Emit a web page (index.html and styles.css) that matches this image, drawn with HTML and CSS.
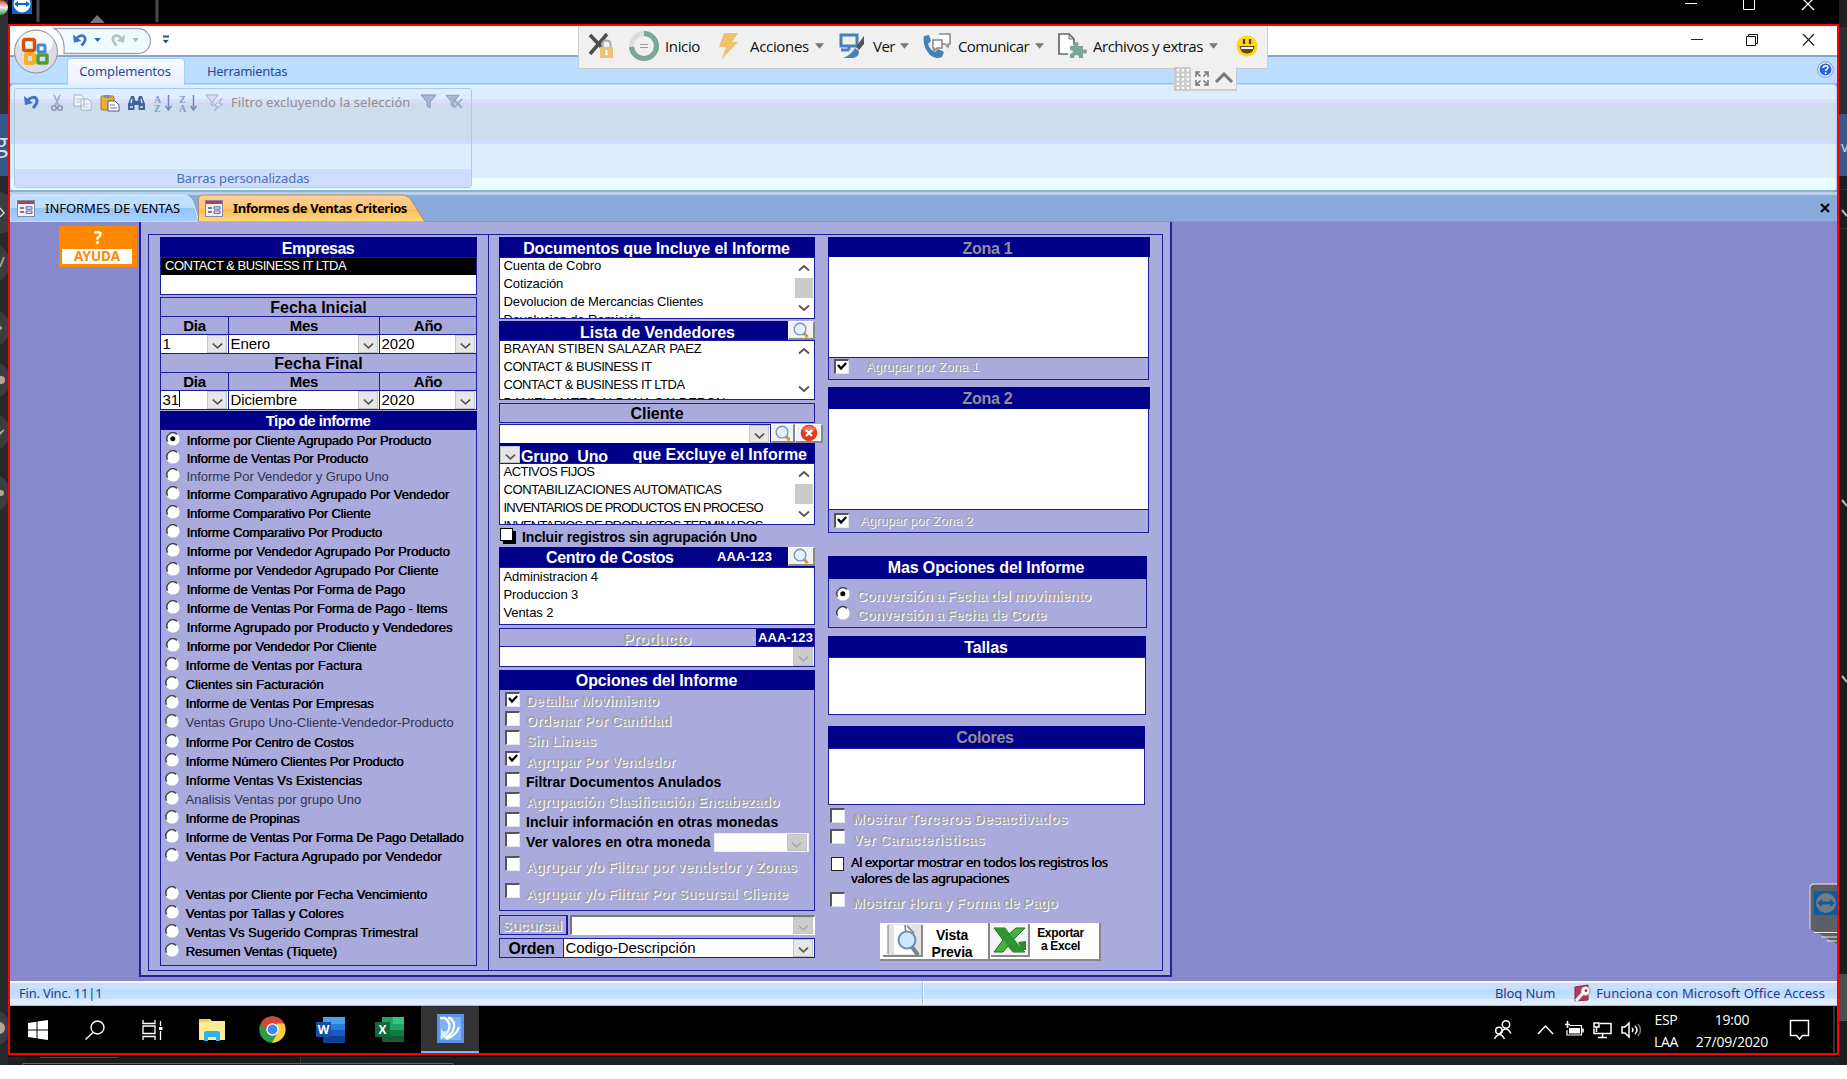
FILE: index.html
```html
<!DOCTYPE html>
<html lang="es">
<head>
<meta charset="utf-8">
<title>Informes de Ventas Criterios</title>
<link rel="stylesheet" href="styles.css">
</head>
<body>
<svg class="defs" width="0" height="0">
  <symbol id="chev" viewBox="0 0 12 8"><path d="M1 1.5l5 4.5 5-4.5" fill="none" stroke="currentColor" stroke-width="1.8"/></symbol>
  <symbol id="radio" viewBox="0 0 14 14"><circle cx="7" cy="7" r="6.6" fill="#fff"/><path d="M1.6 9.6A6 6 0 0 1 11 2.4" fill="none" stroke="#444" stroke-width="1.5"/></symbol>
  <symbol id="radio-on" viewBox="0 0 14 14"><circle cx="7" cy="7" r="6.6" fill="#fff"/><path d="M1.6 9.6A6 6 0 0 1 11 2.4" fill="none" stroke="#444" stroke-width="1.5"/><circle cx="6.8" cy="6.8" r="2.5" fill="#000"/></symbol>
  <symbol id="tick" viewBox="0 0 10 9"><path d="M1 3l3 3.6L9.2 1" fill="none" stroke="#000" stroke-width="2.3"/></symbol>
  <symbol id="lens" viewBox="0 0 20 18"><path d="M12 11l5 5" stroke="#c9a13c" stroke-width="3.4"/><circle cx="9" cy="7.5" r="6.2" fill="#e3f1ff" stroke="#7d93b8" stroke-width="1.4"/></symbol>
  <symbol id="undo" viewBox="0 0 16 14"><path d="M3 7c3-6 10-6 10-1 0 3-2 5-4 7" fill="none" stroke="currentColor" stroke-width="3"/><path d="M0 1l1 9 8-2z" fill="currentColor"/></symbol>
  <symbol id="caret" viewBox="0 0 10 6"><path d="M0 0h10L5 6z" fill="currentColor"/></symbol>
  <symbol id="formicon" viewBox="0 0 18 17"><rect x=".5" y=".5" width="17" height="16" fill="#f4f0f6" stroke="#8a86a8"/><path d="M1 1h16v3H1z" fill="#b04058"/><path d="M3 8h4M3 12h4" stroke="#556" stroke-width="1.4"/><path d="M9 6.800h6v2.400H9zM9 11h6v2.400H9z" fill="#dde6fa" stroke="#5a6aa0"/></symbol>
  <symbol id="funnel" viewBox="0 0 18 16"><path d="M1 1h15l-6 7v6l-3-2V8z" fill="#a9b8d4" stroke="#8594b6"/></symbol>
</svg>

<div class="page">
  <div class="edge edge-left">
    <div class="e-logo"></div><div class="e-gap"></div><div class="e-blue"><span>g</span></div>
    <svg class="e-marks" width="8" height="879" viewBox="0 0 8 879">
      <g fill="#3a3e41"><circle cx="-3" cy="37" r="21"/><circle cx="-10" cy="87" r="20"/><circle cx="-10" cy="152" r="20"/><circle cx="-10" cy="204" r="20"/><circle cx="-10" cy="256" r="20"/><circle cx="-10" cy="317" r="20"/><circle cx="-10" cy="852" r="20"/></g>
      <path d="M0 32l4 5-4 4" stroke="#d8d8d8" fill="none" stroke-width="1.4"/>
      <path d="M0 91l4-10" stroke="#b39a80" stroke-width="2"/><g fill="#b3a59a"><circle cx="0" cy="152" r="2"/><circle cx="1" cy="204" r="4"/><path d="M0 259l4-4v-2l-4 3z"/><circle cx="1" cy="317" r="3"/><circle cx="-1" cy="852" r="6"/></g>
    </svg>
  </div>

  <div class="center">
    <div class="hostbar">
      <svg width="1831" height="24" viewBox="8 0 1831 24">
        <path d="M12 0h20v14H12z" fill="#0e63c4"/><ellipse cx="22" cy="4" rx="8.500" ry="8.500" fill="#fff"/><path d="M14 4l4-3v2h8V1l4 3-4 3V5h-8v2z" fill="#0e63c4"/>
        <path d="M38 0v22M157 0v22" stroke="#4a4a4a" stroke-width="3"/><path d="M90 23l7-8 8 8z" fill="#777"/>
        <path d="M1685 3.500h12" stroke="#fff"/><path d="M1743.500-2h11v11.500h-11z" fill="none" stroke="#fff"/><path d="M1802-2l12 12M1814-2l-12 12" stroke="#fff" stroke-width="1.300"/>
      </svg>
    </div>

    <div class="session">
      <div class="titlebar">
        <svg class="officebtn" width="160" height="50" viewBox="10 26 160 50">
          <path d="M54 28.500h84a12.500 12.500 0 0 1 0 25H64C65 41 62 33 54 28.500z" fill="#effcff" stroke="#9aa3ad" stroke-width="1.300"/>
          <circle cx="36" cy="51.500" r="21.500" fill="#dcdce8" stroke="#8a90a0"/><ellipse cx="36" cy="43" rx="17" ry="12" fill="#fff" opacity=".8"/>
          <rect x="23.500" y="39.500" width="11" height="11" rx="2" fill="none" stroke="#d8500f" stroke-width="3.500"/><rect x="38" y="45" width="7" height="7" rx="1" fill="none" stroke="#3f8bd8" stroke-width="3"/><rect x="26" y="54" width="8" height="9" rx="1" fill="none" stroke="#f5b21c" stroke-width="4"/><rect x="38" y="55" width="9" height="8" rx="1" fill="none" stroke="#4f9a3a" stroke-width="3.500"/>
          <svg x="73" y="33" width="15" height="14" color="#4470c8"><use href="#undo"/></svg>
          <svg x="94" y="38" width="7" height="4" color="#3a5fae"><use href="#caret"/></svg>
          <g transform="translate(125 33) scale(-1 1)"><svg width="15" height="14" color="#b9c0c8"><use href="#undo"/></svg></g>
          <svg x="132" y="38" width="7" height="4" color="#b9b9b9"><use href="#caret"/></svg>
          <path d="M163 36.500h6" stroke="#2b4a86" stroke-width="2"/><svg x="162.500" y="39.500" width="6.500" height="4" color="#2b4a86"><use href="#caret"/></svg>
        </svg>
        <svg class="winbtns" width="126" height="14" viewBox="1690 33 126 14">
          <path d="M1691 39.500h12" stroke="#222"/><path d="M1746.500 36.500h9v9h-9zM1748.500 36v-1.500h9v9H1756" fill="none" stroke="#111"/><path d="M1803 34l11 11.500M1814 34l-11 11.500" stroke="#222" stroke-width="1.200"/>
        </svg>
      </div>

      <div class="tabs">
        <div class="tab active">Complementos</div>
        <div class="tab plain">Herramientas</div>
        <svg class="help" width="17" height="17" viewBox="0 0 17 17"><circle cx="8.500" cy="8.500" r="7.800" fill="#e8f0fc" stroke="#7c98cc"/><circle cx="8.500" cy="8.500" r="6" fill="#2d62d8"/><path d="M6.300 7c0-3 4.600-3 4.600-.4 0 1.700-2.300 1.600-2.300 3.400M8.600 11.300v1.700" stroke="#fff" stroke-width="1.600" fill="none"/></svg>
      </div>

      <div class="ribbon">
        <div class="group">
          <div class="tools">
            <svg width="16" height="16" color="#4470c8"><use href="#undo"/></svg>
            <svg class="cut" width="14" height="18" viewBox="0 0 14 18"><path d="M4 1l5 11M10 1L5 12" stroke="#a4afc4" stroke-width="1.800"/><circle cx="4" cy="14" r="2.300" fill="none" stroke="#8d9ab6" stroke-width="1.600"/><circle cx="10" cy="14" r="2.300" fill="none" stroke="#8d9ab6" stroke-width="1.600"/></svg>
            <svg width="19" height="17" viewBox="0 0 19 17"><path d="M1 1h7l3 3v8H1zM8 5h7l3 3v8H8z" fill="#f1f5fc" stroke="#a4b1cc"/><path d="M3 5h5M3 8h4M10 10h6M10 13h6" stroke="#b7c2d8"/></svg>
            <svg width="20" height="18" viewBox="0 0 20 18"><rect x="1" y="2" width="13" height="14" rx="1" fill="#e8ae3a" stroke="#a8762a"/><path d="M4 1h7v3H4z" fill="#8a8f9c"/><path d="M8 7h7l4 4v6H8z" fill="#fff" stroke="#555c70"/><path d="M10 11h5M10 14h7" stroke="#5d76b4"/></svg>
            <svg width="19" height="17" viewBox="0 0 19 17"><path d="M1 16v-6l3-8h3l1.500 5h2L12 2h3l3 8v6h-6.500v-5h-4v5z" fill="#41649c"/><path d="M3 13h3M13 13h3M5 5l-1 4M14 5l1 4" stroke="#cfe0f8" stroke-width="1.500"/></svg>
            <svg width="18" height="18" viewBox="0 0 18 18"><text x="0" y="8.500" class="sort">A</text><text x="0" y="17.500" class="sort">Z</text><path d="M14.500 1v14M11.500 12l3 4 3-4" stroke="#7388b4" stroke-width="1.500" fill="none"/></svg>
            <svg width="18" height="18" viewBox="0 0 18 18"><text x="0" y="8.500" class="sort">Z</text><text x="0" y="17.500" class="sort">A</text><path d="M14.500 1v14M11.500 12l3 4 3-4" stroke="#7388b4" stroke-width="1.500" fill="none"/></svg>
            <svg width="19" height="17" viewBox="0 0 19 17"><path d="M1 1h12L8 7v5L6 10V7z" fill="#d4deee" stroke="#a0aec8"/><path d="M17 4l-8 8h4l-4 5 9-7h-4z" fill="#dfe6f4" stroke="#a0aec8"/></svg>
            <span class="filtertext">Filtro excluyendo la selección</span>
            <svg width="18" height="16"><use href="#funnel"/></svg>
            <svg width="18" height="16" viewBox="0 0 18 16"><use href="#funnel" width="16" height="15"/><path d="M8 5l9 9M17 5l-8 9" stroke="#9aa9c8" stroke-width="1.800"/></svg>
          </div>
          <div class="grouplabel">Barras personalizadas</div>
        </div>
      </div>

      <div class="doctabs">
        <svg class="tabshapes" width="430" height="28" viewBox="10 194 430 28">
          <defs>
            <linearGradient id="tabBlue" x2="0" y2="1"><stop offset="0" stop-color="#c4e2ff"/><stop offset=".48" stop-color="#bbddff"/><stop offset=".5" stop-color="#94c4f8"/><stop offset="1" stop-color="#a8d2ff"/></linearGradient>
            <linearGradient id="tabGold" x2="0" y2="1"><stop offset="0" stop-color="#ffd09a"/><stop offset=".5" stop-color="#ffc473"/><stop offset=".55" stop-color="#fdbb55"/><stop offset="1" stop-color="#ffdd80"/></linearGradient>
          </defs>
          <path d="M10 222v-23q0-4 4-4h170q7 0 10 10l5 17z" fill="url(#tabBlue)" stroke="#d8ecff"/>
          <path d="M198.500 222v-23q0-4 4-4H402q7 0 11 8l12 19z" fill="url(#tabGold)" stroke="#a89068"/>
        </svg>
        <div class="doctab first"><svg width="18" height="17"><use href="#formicon"/></svg><span>INFORMES DE VENTAS</span></div>
        <div class="doctab second"><svg width="18" height="17"><use href="#formicon"/></svg><span>Informes de Ventas Criterios</span></div>
        <svg class="docclose" width="10" height="10" viewBox="0 0 10 10"><path d="M1 1l8 8M9 1L1 9" stroke="#000" stroke-width="2.200"/></svg>
      </div>

      <div class="workspace">
        <div class="ayuda"><b>?</b><span>AYUDA</span></div>

        <div class="form"><div class="formframe">
          <div class="col col1">
            <div class="hd h20 tight5">Empresas</div>
            <div class="list empresas"><div class="row sel">CONTACT &amp; BUSINESS IT LTDA</div></div>
            <div class="dates">
              <div class="dt">Fecha Inicial</div>
              <div class="dh"><span>Dia</span><span>Mes</span><span>Año</span></div>
              <div class="di">
                <div class="combo">1<i><svg><use href="#chev"/></svg></i></div>
                <div class="combo">Enero<i><svg><use href="#chev"/></svg></i></div>
                <div class="combo">2020<i><svg><use href="#chev"/></svg></i></div>
              </div>
              <div class="dt">Fecha Final</div>
              <div class="dh"><span>Dia</span><span>Mes</span><span>Año</span></div>
              <div class="di">
                <div class="combo"><span class="cursor">31</span><i><svg><use href="#chev"/></svg></i></div>
                <div class="combo">Diciembre<i><svg><use href="#chev"/></svg></i></div>
                <div class="combo">2020<i><svg><use href="#chev"/></svg></i></div>
              </div>
            </div>
            <div class="hd tipo">Tipo de informe</div>
            <div class="radios">
              <label class="r r18"><svg><use href="#radio-on"/></svg>Informe por Cliente Agrupado Por Producto</label>
              <label class="r r18"><svg><use href="#radio"/></svg>Informe de Ventas Por Producto</label>
              <label class="r r18 dim"><svg><use href="#radio"/></svg>Informe Por Vendedor y Grupo Uno</label>
              <label class="r x"><svg><use href="#radio"/></svg>Informe Comparativo Agrupado Por Vendedor</label>
              <label class="r n"><svg><use href="#radio"/></svg>Informe Comparativo Por Cliente</label>
              <label class="r n"><svg><use href="#radio"/></svg>Informe Comparativo Por Producto</label>
              <label class="r x"><svg><use href="#radio"/></svg>Informe por Vendedor Agrupado Por Producto</label>
              <label class="r x"><svg><use href="#radio"/></svg>Informe por Vendedor Agrupado Por Cliente</label>
              <label class="r"><svg><use href="#radio"/></svg>Informe de Ventas Por Forma de Pago</label>
              <label class="r"><svg><use href="#radio"/></svg>Informe de Ventas Por Forma de Pago - Items</label>
              <label class="r xx"><svg><use href="#radio"/></svg>Informe Agrupado por Producto y Vendedores</label>
              <label class="r"><svg><use href="#radio"/></svg>Informe por Vendedor Por Cliente</label>
              <label class="r s xx"><svg><use href="#radio"/></svg>Informe de Ventas por Factura</label>
              <label class="r s x"><svg><use href="#radio"/></svg>Clientes sin Facturación</label>
              <label class="r s"><svg><use href="#radio"/></svg>Informe de Ventas Por Empresas</label>
              <label class="r s dim wide"><svg><use href="#radio"/></svg>Ventas Grupo Uno-Cliente-Vendedor-Producto</label>
              <label class="r s n"><svg><use href="#radio"/></svg>Informe Por Centro de Costos</label>
              <label class="r s n"><svg><use href="#radio"/></svg>Informe Número Clientes Por Producto</label>
              <label class="r s xx"><svg><use href="#radio"/></svg>Informe Ventas Vs Existencias</label>
              <label class="r s dim xx"><svg><use href="#radio"/></svg>Analisis Ventas por grupo Uno</label>
              <label class="r s n"><svg><use href="#radio"/></svg>Informe de Propinas</label>
              <label class="r s"><svg><use href="#radio"/></svg>Informe de Ventas Por Forma De Pago Detallado</label>
              <label class="r s xxx"><svg><use href="#radio"/></svg>Ventas Por Factura Agrupado por Vendedor</label>
              <label class="r s"></label>
              <label class="r s x"><svg><use href="#radio"/></svg>Ventas por Cliente por Fecha Vencimiento</label>
              <label class="r s xx"><svg><use href="#radio"/></svg>Ventas por Tallas y Colores</label>
              <label class="r s xx"><svg><use href="#radio"/></svg>Ventas Vs Sugerido Compras Trimestral</label>
              <label class="r s"><svg><use href="#radio"/></svg>Resumen Ventas (Tiquete)</label>
            </div>
          </div>

          <div class="col col2">
            <div class="hd h20">Documentos que Incluye el Informe</div>
            <div class="list docs"><div class="rows"><div class="row">Cuenta de Cobro</div><div class="row">Cotización</div><div class="row">Devolucion de Mercancias Clientes</div><div class="row">Devolucion de Remisión</div></div>
              <div class="sb"><svg><use href="#chev"/></svg><b></b><svg><use href="#chev"/></svg></div></div>
            <div class="hd withbtn vend"><span>Lista de Vendedores</span><i class="lensbtn"><svg><use href="#lens"/></svg></i></div>
            <div class="list vends caps"><div class="rows"><div class="row c0">BRAYAN STIBEN SALAZAR PAEZ</div><div class="row">CONTACT &amp; BUSINESS IT</div><div class="row">CONTACT &amp; BUSINESS IT LTDA</div><div class="row c0">DANIEL MATEO ALDANA CALDERON</div></div>
              <div class="sb"><svg><use href="#chev"/></svg><svg><use href="#chev"/></svg></div></div>
            <div class="box lbl">Cliente</div>
            <div class="clientrow"><div class="combo"><i><svg><use href="#chev"/></svg></i></div><i class="lensbtn"><svg><use href="#lens"/></svg></i><i class="lensbtn del"><svg viewBox="0 0 18 18"><circle cx="9" cy="9" r="8.300" fill="#e03a1e"/><ellipse cx="9" cy="5.500" rx="6" ry="3.500" fill="#ff9a80" opacity=".6"/><path d="M6 6l6 6M12 6l-6 6" stroke="#fff" stroke-width="2.400"/></svg></i></div>
            <div class="hd grupo"><i class="cb"><svg><use href="#chev"/></svg></i><span class="g1">Grupo&nbsp; Uno</span><span class="g2">que Excluye el Informe</span></div>
            <div class="list grupos caps"><div class="rows"><div class="row">ACTIVOS FIJOS</div><div class="row c1">CONTABILIZACIONES AUTOMATICAS</div><div class="row c2">INVENTARIOS DE PRODUCTOS EN PROCESO</div><div class="row c2">INVENTARIOS DE PRODUCTOS TERMINADOS</div></div>
              <div class="sb"><svg><use href="#chev"/></svg><b></b><svg><use href="#chev"/></svg></div></div>
            <div class="incl"><em></em><span>Incluir registros sin agrupación Uno</span></div>
            <div class="hd withbtn centro"><span>Centro de Costos</span><small>AAA-123</small><i class="lensbtn"><svg><use href="#lens"/></svg></i></div>
            <div class="list costos"><div class="row">Administracion 4</div><div class="row">Produccion 3</div><div class="row">Ventas 2</div></div>
            <div class="box prod"><span class="emb">Producto</span><small>AAA-123</small></div>
            <div class="combo prodcombo off"><i><svg><use href="#chev"/></svg></i></div>
            <div class="hd h20 opc">Opciones del Informe</div>
            <div class="checks">
              <label class="emb u1"><em class="on"><svg><use href="#tick"/></svg></em><span>Detallar Movimiento</span></label>
              <label class="emb u2"><em></em><span>Ordenar Por Cantidad</span></label>
              <label class="emb u3"><em></em><span>Sin Lineas</span></label>
              <label class="emb u3"><em class="on"><svg><use href="#tick"/></svg></em><span>Agrupar Por Vendedor</span></label>
              <label class="u2"><em></em><span>Filtrar Documentos Anulados</span></label>
              <label class="emb u2"><em></em><span>Agrupación Clasificación Encabezado</span></label>
              <label class="u2 w"><em></em><span>Incluir información en otras monedas</span></label>
              <label class="u2 mon w"><em></em><span>Ver valores en otra moneda</span><div class="combo off"><i><svg><use href="#chev"/></svg></i></div></label>
              <label class="emb u3 zon"><em></em><span>Agrupar y/o Filtrar por vendedor y Zonas</span></label>
              <label class="emb u3 suc"><em></em><span>Agrupar y/o Filtrar Por Sucursal Cliente</span></label>
            </div>
            <div class="sucursal"><div class="box emb">Sucursal</div><div class="combo off"><i><svg><use href="#chev"/></svg></i></div></div>
            <div class="orden"><b>Orden</b><div class="combo">Codigo-Descripción<i><svg><use href="#chev"/></svg></i></div></div>
          </div>

          <div class="col col3">
            <div class="hd zh z1 gray">Zona 1</div>
            <div class="zlist"></div>
            <div class="zfoot f1 emb"><em class="on"><svg><use href="#tick"/></svg></em><span>Agrupar por Zona 1</span></div>
            <div class="hd zh z2 gray">Zona 2</div>
            <div class="zlist"></div>
            <div class="zfoot f2 emb"><em class="on"><svg><use href="#tick"/></svg></em><span>Agrupar por Zona 2</span></div>
            <div class="hd mas">Mas Opciones del Informe</div>
            <div class="masbox">
              <label class="emb"><svg><use href="#radio-on"/></svg><span>Conversión a Fecha del movimiento</span></label>
              <label class="emb"><svg><use href="#radio"/></svg><span>Conversión a Fecha de Corte</span></label>
            </div>
            <div class="hd tallas">Tallas</div>
            <div class="list tl"></div>
            <div class="hd colores gray">Colores</div>
            <div class="list cl"></div>
            <label class="rc emb m1"><em></em><span>Mostrar Terceros Desactivados</span></label>
            <label class="rc emb m2"><em></em><span>Ver Caracteristicas</span></label>
            <label class="rc exp"><em class="flat"></em><span>Al exportar mostrar en todos los registros los valores de las agrupaciones</span></label>
            <label class="rc emb m4"><em></em><span>Mostrar Hora y Forma de Pago</span></label>
            <div class="bigbtns">
              <div class="big b1"><svg width="43" height="35" viewBox="0 0 43 35"><path d="M0 0h8v32H0z" fill="#fff"/><path d="M8 1h34v31H8z" fill="#e4e2de"/><path d="M8 2v29" stroke="#777"/><path d="M14 2h12l8 7v22H14z" fill="#fff"/><path d="M25 2l1 10M27 3l7 7" stroke="#6a7f9c" stroke-width="1.500"/><circle cx="27" cy="17" r="8.500" fill="#cfe6fb" stroke="#6d8fb8" stroke-width="2"/><path d="M32 24l6 8" stroke="#777f8c" stroke-width="4"/><path d="M42 2v31H3" stroke="#888" stroke-width="2" fill="none"/></svg><span>Vista<br>Previa</span></div>
              <div class="big b2"><svg width="40" height="34" viewBox="0 0 40 34"><path d="M0 0h39v32H0z" fill="#f2f3f2"/><path d="M4 5h11l4 6 7-6h9L23 17l12 12H23l-5-6-5 6H4l9-12z" fill="#4aaf42" stroke="#1f6e22"/><path d="M4 5h11l19 23-11 1z" fill="#2f9434"/><path d="M28 19l8-1v9h-4z" fill="#2c8a2e"/><path d="M39 1v32H1" stroke="#888" stroke-width="2" fill="none"/></svg><span>Exportar<br>a Excel</span></div>
            </div>
          </div>
        </div></div>

        <svg class="tvflap" width="28" height="62" viewBox="0 0 28 62"><path d="M28 1H5Q1 1 1 5v41l10 5 17 10z" fill="#5d5f62"/><path d="M1 46V5q0-4 4-4h23" fill="none" stroke="#c8c8cc" stroke-width="1.300"/><path d="M5 8h23v24H5z" fill="#0c5da0"/><circle cx="17" cy="20" r="10" fill="#777a7e"/><path d="M8 20l5-4v2.500h8V16l5 4-5 4v-2.500h-8V24z" fill="#0c5da0"/><path d="M5 49.500h23M12 54h16M18 58h10" stroke="#e8e8e8" stroke-width="1.200"/></svg>
      </div>

      <div class="status"><span class="fin">Fin. Vinc. 11|1</span><span class="sep"></span><span class="bloq">Bloq Num</span>
        <svg width="19" height="19" viewBox="0 0 19 19"><path d="M2 3l13-2v15L2 17z" fill="#b03a5a" stroke="#8a2444"/><circle cx="12.500" cy="7" r="4.500" fill="#fff" stroke="#a88"/><circle cx="13" cy="6.500" r="1.500" fill="#b03a5a"/><path d="M9.500 9.500L3 17" stroke="#fff" stroke-width="3"/></svg>
        <span class="acc">Funciona con Microsoft Office Access</span></div>

      <div class="taskbar">
        <div class="tk w55"><svg width="20" height="20" viewBox="0 0 20 20"><path d="M0 3l8.500-1.300v7.800H0zM9.500 1.500L20 0v9.500H9.500zM0 10.500h8.500v7.800L0 17zM9.500 10.500H20V20L9.500 18.500z" fill="#fff"/></svg></div>
        <div class="tk w60"><svg width="20" height="20" viewBox="0 0 20 20" fill="none" stroke="#fff" stroke-width="1.400"><circle cx="12.500" cy="7.500" r="6.500"/><path d="M8 12.500L.5 19.500"/></svg></div>
        <div class="tk w55"><svg width="21" height="20" viewBox="0 0 21 20" fill="none" stroke="#fff" stroke-width="1.300"><path d="M1 0v3.500h12V0M1 20v-3.500h12V20M1 6h12v7.500H1zM18.500 1v5M18.500 11v9"/><path d="M17 7h3.500v3H17z" fill="#fff" stroke="none"/></svg></div>
        <div class="tk w63"><svg width="26" height="22" viewBox="0 0 26 22"><path d="M0 0h11l2 2h13v19H0z" fill="#ffeb94"/><path d="M0 0h10v3H0z" fill="#f5cf3c"/><path d="M5 22v-8q0-2 2-2h12q2 0 2 2v8h-4v-4H9v4z" fill="#2cb3f0"/></svg></div>
        <div class="tk w58"><svg width="27" height="27" viewBox="0 0 27 27"><circle cx="13.500" cy="13.500" r="13.200" fill="#2c9a4b"/><path d="M2 7A13.200 13.200 0 0 1 25 7.500H13.500L8 15z" fill="#dd4438"/><path d="M25 7.500A13.200 13.200 0 0 1 13 26.700l6-10.500-1.500-8.700z" fill="#ffcd42"/><circle cx="13.500" cy="13.500" r="6.200" fill="#fff"/><circle cx="13.500" cy="13.500" r="4.900" fill="#4285f4"/></svg></div>
        <div class="tk"><svg width="29" height="26" viewBox="0 0 29 26"><path d="M7 0h22v7H7z" fill="#41a5ee"/><path d="M7 7h22v6H7z" fill="#2b7cd3"/><path d="M7 13h22v6H7z" fill="#185abd"/><path d="M7 19h22v7H7z" fill="#103f91"/><path d="M0 5h15v15H0z" fill="#144fa8"/><text x="7.500" y="17" class="appletter">W</text></svg></div>
        <div class="tk"><svg width="29" height="26" viewBox="0 0 29 26"><path d="M7 0h11v13H7z" fill="#21a366"/><path d="M18 0h11v7H18z" fill="#33c481"/><path d="M18 7h11v6H18z" fill="#21a366"/><path d="M7 13h22v6H7z" fill="#107c41"/><path d="M7 19h22v6H7z" fill="#185c37"/><path d="M0 5h15v15H0z" fill="#0e6a38"/><text x="7.500" y="17" class="appletter">X</text></svg></div>
        <div class="tk current"><svg width="27" height="29" viewBox="0 0 27 29"><path d="M0 0h27v29H0z" fill="#5b93e6"/><path d="M3 3h21v23H3z" fill="#7fb2f4"/><path d="M3 4h5q6 5 4 11-2 6-8 9M11 4h2q5 4 4 9-1 7-9 11M22 13q-3 9-13 12" stroke="#fff" stroke-width="2.300" fill="none"/><path d="M4 25V14q2 6 8 2-2 6-8 9z" fill="#c8f6ff"/></svg></div>
        <div class="tray">
          <svg width="370" height="47" viewBox="1474 1006 370 47" fill="none" stroke="#fff" stroke-width="1.500">
            <circle cx="1506" cy="1024.500" r="3.700"/><path d="M1500 1033.500q6-9 11 0"/><circle cx="1499" cy="1030.500" r="3.300"/><path d="M1494.500 1039q5-9 10 0"/>
            <path d="M1538 1034l7.500-8 7.500 8"/><path d="M1570 1025.500h11.500v9.500H1567v-5" stroke-width="1.200"/>
            <path d="M1569 1028h11v5.500h-11z" fill="#fff" stroke="none"/><path d="M1583 1028.500v4M1565 1024.500h5M1567.500 1021v7" stroke-width="1.600"/>
            <path d="M1600 1023.500h11v10h-17v-5M1602.500 1034v4M1598 1037.500h9M1594 1023h5v4h-5zM1596.500 1027v5"/>
            <path d="M1622 1027v6h3l4 4v-14l-4 4zM1632 1028q2 2 0 4M1635 1026q4 4 0 8" /><path d="M1638 1024q5 6 0 12" stroke="#777"/>
            <path d="M1790.500 1020.500h18v15h-6l-3 3.500-3-3.500h-6z"/><path d="M1834 1006v47" stroke="#666" stroke-width="1"/>
          </svg>
          <div class="lang">ESP<br>LAA</div><div class="clock">19:00<br>27/09/2020</div>
        </div>
      </div>

      <div class="tvbar">
        <svg class="i1" width="26" height="26" viewBox="0 0 26 26"><path d="M2 2l18 19M19 1L2 21" stroke="#4d4d4d" stroke-width="3.600"/><rect x="12" y="14" width="13" height="11" fill="#ecc075"/><path d="M14.500 14v-3q0-3.500 4-3.500t4 3.500v3" fill="none" stroke="#aaa" stroke-width="2"/><path d="M18.500 17v5" stroke="#fff" stroke-width="2"/></svg>
        <svg class="i2" width="30" height="30" viewBox="0 0 30 30" fill="none"><circle cx="15" cy="15" r="12.500" stroke="#dcdcdc" stroke-width="5"/><path d="M15 2.500A12.500 12.500 0 1 1 2.500 16" stroke="#7aa796" stroke-width="5"/><path d="M11 13.500h8M11 16.500h8" stroke="#999"/></svg>
        <span class="t1">Inicio</span>
        <svg class="i3" width="20" height="26" viewBox="0 0 20 26"><path d="M5 0h14l-6 9h6L3 26l4-12H0z" fill="#eec070"/></svg>
        <span class="t2">Acciones</span><svg class="ca" width="9" height="6"><use href="#caret"/></svg>
        <svg class="i4" width="26" height="26" viewBox="0 0 26 26"><path d="M2 2h16v11H2zM10 13v4M2 17h8" fill="none" stroke="#4a80ba" stroke-width="3"/><path d="M25 3l-8 11 3 3 5-6z" fill="#555"/><path d="M16 15l4 3q0 6-6 7H4q8-3 12-10z" fill="#4a80ba"/></svg>
        <span class="t3">Ver</span><svg class="ca" width="9" height="6"><use href="#caret"/></svg>
        <svg class="i5" width="28" height="26" viewBox="0 0 28 26"><path d="M1 3l5-1 2 6-3 3q2 6 7 8l3-3 6 3-2 5q-6 3-12-2Q-1 13 1 3z" fill="#4a80ba"/><path d="M16 1h11v10h-2v3l-3-3h-3M10 7h9v8h-5l-3 3v-3h-1z" fill="#fff" stroke="#888" stroke-width="1.500"/></svg>
        <span class="t4">Comunicar</span><svg class="ca" width="9" height="6"><use href="#caret"/></svg>
        <svg class="i6" width="29" height="26" viewBox="0 0 29 26"><path d="M10 21H1V1h10l5 5v6" fill="#fff" stroke="#666" stroke-width="1.700"/><path d="M11 1v5h5" fill="none" stroke="#666"/><path d="M12 13h4q-2-4 2-4t2 4h5v4q4-2 4 1.500T25 20v5h-4q0-3-2.500-3T16 25h-4v-4q3-1 3-2.500T12 17z" fill="#7aa796"/></svg>
        <span class="t5">Archivos y extras</span><svg class="ca" width="9" height="6"><use href="#caret"/></svg>
        <svg class="i7" width="22" height="22" viewBox="0 0 22 22"><circle cx="11" cy="11" r="10.500" fill="#f9d71c"/><path d="M8 4v5M14 4v5" stroke="#553a10" stroke-width="2.200"/><path d="M3.500 11h15q-1 7.500-7.500 7.500T3.500 11z" fill="#6b4412"/><path d="M5 12h12v2H5z" fill="#fff"/></svg>
      </div>
      <div class="tvtab"><svg width="63" height="24" viewBox="0 0 63 24"><path d="M0 0h17v24H0z" fill="#cacaca"/><path d="M4 2v20M9 2v20M14 2v20" stroke="#fff" stroke-width="2.500" stroke-dasharray="2.500 2"/><path d="M22 10V5h4M30 5h4v5M22 13v5h4M30 18h4v-5M23 6l3.500 3.500M33 6l-3.500 3.500M23 17l3.500-3.500M33 17l-3.500-3.500" fill="none" stroke="#777" stroke-width="1.500"/><path d="M42 15l8-8 8 8" fill="none" stroke="#777" stroke-width="3"/></svg></div>
    </div>
    <div class="below"><svg width="1831" height="10" viewBox="8 0 1831 10"><path d="M8 0h1831v2H8z" fill="#000"/><path d="M26 2h274v8H26z" fill="#1a1b1d"/><path d="M40 2.500h78" stroke="#34507a"/><path d="M300.500 2v8" stroke="#3a3d40"/><path d="M23 10V8.500h430V10" fill="none" stroke="#666"/></svg></div>
  </div>

  <div class="edge edge-right">
    <div class="er-top"></div><div class="er-mid"></div><div class="er-blue">v</div>
    <svg width="8" height="889" viewBox="0 0 8 889"><path d="M0 13.500h8M0 52.500h8M0 839.500h8" stroke="#333"/><path d="M3 34l5 6M3 324l5 6M3 500l5 6" stroke="#bbb" stroke-width="2"/><path d="M0 798h8v47H0z" fill="#4c4e51"/></svg>
  </div>
</div>
</body>
</html>
```
FILE: styles.css
```css
* { box-sizing: border-box; }
body { margin: 0; background: #fff; font-family: "Liberation Sans", Arial, sans-serif; color: #000; }
svg { display: block; flex: none; }
em, i { font-style: normal; display: block; flex: none; }
.defs { position: absolute; }
.page { display: grid; grid-template-columns: 8px 1831px 8px; height: 1065px; overflow: hidden; }
.edge { background: #262a2d; overflow: hidden; }
.e-logo { height: 15px; background: linear-gradient(#d04030, #eee 50%, #2b9a4a); border-radius: 0 8px 8px 0; }
.e-gap { height: 99px; background: #303236; }
.e-blue, .er-blue { height: 62px; background: #345a8c; color: #ddd; font: 26px/56px "Open Sans", sans-serif; overflow: hidden; }
.e-blue span { margin-left: -6px; }
.edge-right { background: #1b1d20; }
.er-top { height: 27px; background: #202020; }
.er-mid { height: 87px; background: #2c2e33; }
.er-blue { font-size: 15px; text-indent: 2px; line-height: 64px; }

.center { display: flex; flex-direction: column; min-width: 0; }
.hostbar { height: 24px; background: #000; }
.session { position: relative; width: 1831px; height: 1031px; border: 2px solid #f00; display: flex; flex-direction: column; background: #88c; overflow: hidden; }
.below { height: 10px; background: #1e2123; }

.titlebar { height: 31px; background: #fff; border-bottom: 2px solid #8fa3c8; display: flex; justify-content: space-between; flex: none; }
.officebtn { position: relative; z-index: 3; }
.winbtns { margin: 7px 21px 0 0; }
.tabs { height: 27px; background: #bdf; display: flex; flex: none; border-bottom: 1px solid #9be; font: 13px/1 "Noto Sans", sans-serif; color: #2a4a94; }
.tab { height: 27px; padding-top: 8px; text-align: center; }
.tab.active { margin: 1px 0 0 57px; width: 118px; background: linear-gradient(#f4fbff, #eaf0ff); border: 1px solid #a8cdf0; border-bottom: 0; border-radius: 4px 4px 0 0; padding: 6px 2px 0 0; letter-spacing: -.15px; position: relative; z-index: 1; }
.tab.plain { margin-left: 22px; letter-spacing: -.3px; }
.help { margin: 4px 3px 0 auto; }
.ribbon { height: 108px; flex: none; padding: 3px 3px; border: 1px solid #b4dcf4; border-bottom: 2px solid #88b4d8; border-radius: 4px; background: linear-gradient(#def 0 14px, #ddf 14px 18px, #cde 18px 55px, #cdf 55px 59px, #def 59px 93px, #e8ffff 93px); }
.group { width: 458px; height: 100px; border: 1px solid #aacbe6; border-radius: 3px; display: flex; flex-direction: column; }
.tools { height: 81px; padding: 5px 0 0 9px; display: flex; align-items: flex-start; gap: 7.500px; }
.cut { margin: 0 2px; }
.sort { font: bold 10px "Liberation Serif", serif; fill: #8b9cc0; }
.filtertext { font: 13px/17px "Noto Sans", sans-serif; color: #8f9090; letter-spacing: .08px; margin-right: 2px; white-space: nowrap; }
.grouplabel { flex: 1; background: #cdf; text-align: center; font: 13px/18px "Noto Sans", sans-serif; color: #4a70b0; letter-spacing: -.09px; }
.doctabs { height: 30px; flex: none; background: linear-gradient(#b9cfee 0 3px, #8ad 3px); border-bottom: 1px solid #7a9ad8; display: grid; grid-template-columns: 187px 230px 1fr; position: relative; padding-top: 3px; }
.tabshapes { position: absolute; left: 0; top: 2px; }
.doctab { position: relative; display: flex; align-items: center; gap: 10px; font: 13px/1 "Noto Sans", sans-serif; }
.first { padding-left: 7px; letter-spacing: -.03px; }
.second { padding-left: 8px; font-weight: bold; letter-spacing: -.42px; }
.docclose { justify-self: end; margin: 8px 7px 0 0; }

.workspace { flex: 1; display: flex; background: #88c; position: relative; min-height: 0; }
.ayuda { width: 78px; height: 41px; margin: 4px 2px 0 49px; background: #f80; color: #fff; text-align: center; flex: none; }
.ayuda b { display: block; font: bold 17px/23px "Noto Sans", sans-serif; }
.ayuda span { display: block; margin: 0 5px 0 3px; height: 15px; background: #fff; color: #f80; font: bold 13.500px/15px "Noto Sans", sans-serif; }
.tvflap { position: absolute; right: 0; top: 661px; }
.form { width: 1033px; height: 755px; background: #aad; border: 2px solid #22229b; border-top: 0; padding: 12px 7px 5px; flex: none; }
.formframe { height: 737px; border: 1px solid #1c1c98; display: flex; padding-left: 11px; }
.col { padding-top: 2px; display: flex; flex-direction: column; align-items: flex-start; flex: none; }
.col1 { width: 329px; padding-right: 11px; border-right: 1px solid #1c1c98; }
.col2 { width: 316px; margin-left: 10px; }
.col3 { margin-left: 13px; width: 323px; }
.col1 > *, .col2 > * { width: 100%; flex: none; }

.hd { background: #008; color: #fff; font-weight: bold; font-size: 16px; line-height: 23px; text-align: center; letter-spacing: -.11px; white-space: nowrap; padding-right: 1px; }
.h20 { height: 20px; }
.tight5 { letter-spacing: -.5px; }
.gray { color: #909098; letter-spacing: -.3px; }
.list { background: #fff; border: 1px solid #1c1c98; overflow: hidden; display: flex; }
.rows { flex: 1; margin-top: -1px; }
.row { height: 18px; line-height: 18px; padding-left: 3.500px; font-size: 13px; letter-spacing: -.1px; white-space: nowrap; }
.caps .row, .sel { letter-spacing: -.5px; }
.caps .c0 { letter-spacing: -.13px; } .caps .c1 { letter-spacing: -.4px; } .caps .c2 { letter-spacing: -.75px; }
.sel { background: #000; color: #fff; width: 100%; height: 17px; line-height: 16px; padding-left: 4px; }
.empresas { height: 38px; }
.dates { margin-top: 2px; height: 113px; border: 1px solid #1c1c98; font-weight: bold; }
.dt { height: 19px; line-height: 20px; font-size: 16px; text-align: center; border-bottom: 1px solid #1c1c98; letter-spacing: .05px; }
.dh, .di { display: grid; grid-template-columns: 67px 151px 97px; }
.dh { height: 18px; font-size: 15px; line-height: 18px; text-align: center; letter-spacing: -.3px; border-bottom: 1px solid #1c1c98; }
.dh span + span, .di .combo + .combo { border-left: 1px solid #1c1c98; }
.di { height: 19px; border-bottom: 1px solid #1c1c98; font-weight: normal; }
.combo { background: #fff; display: flex; font-size: 15px; line-height: 17px; padding: 0 1px 0 1.500px; letter-spacing: -.1px; white-space: nowrap; }
.combo i, .cb { margin-left: auto; width: 20px; background: #e6e6e6; border: 1px solid #c4c4c4; color: #555; display: grid; place-items: center; }
.combo i svg, .cb svg { width: 11px; height: 8px; margin-top: 4px; }
.off i { background: #ccc; color: #aaa; }
.cursor { border-right: 1px solid #000; height: 16px; line-height: 17px; }
.tipo { margin-top: 1px; height: 19px; line-height: 19px; font-size: 15px; letter-spacing: -.5px; }
.radios { height: 536px; border: 1px solid #1c1c98; border-top: 0; padding: 1.500px 0 0 4.500px; }
.r { display: flex; height: 19.080px; align-items: center; gap: 7px; font-size: 13px; letter-spacing: -.12px; white-space: nowrap; text-shadow: .4px 0 0 #000; }
.r svg { width: 14px; height: 14px; margin-top: -3px; }
.r18 { height: 18px; }
.r18.dim { height: 17px; letter-spacing: -.07px; }
.s { margin-left: -1px; }
.dim { color: #33334d; text-shadow: none; }
.wide { letter-spacing: 0; }
.x { letter-spacing: -.03px; } .xx { letter-spacing: .03px; } .xxx { letter-spacing: .1px; } .n { letter-spacing: -.17px; }

.docs { height: 62px; }
.sb { width: 18px; margin-right: 1px; display: flex; flex-direction: column; align-items: center; color: #555; }
.sb svg { width: 12px; height: 8px; flex: none; margin: 6px 0; }
.sb svg:first-child { transform: rotate(180deg); }
.sb svg:last-child { margin-top: auto; }
.sb b { width: 18px; height: 20px; background: #cbcbcb; }
.withbtn { display: flex; padding-right: 0; }
.withbtn span { margin: 0 auto; }
.lensbtn { width: 27px; height: 19px; background: #f2f2f4; border: 1px solid #fff; border-right: 2px solid #888; border-bottom: 2px solid #888; display: grid; place-items: center; }
.lensbtn svg { width: 20px; height: 17px; }
.vend { margin-top: 2px; height: 19px; line-height: 23px; }
.vend span { margin-left: 81px; letter-spacing: -.04px; }
.vends { height: 60px; }
.box { border: 1px solid #1c1c98; }
.lbl { margin-top: 3px; height: 20px; font: bold 16px/19px "Liberation Sans"; text-align: center; letter-spacing: -.05px; }
.clientrow { margin-top: 1px; height: 19px; display: flex; }
.clientrow .combo { width: 272px; border: 1px solid #1c1c98; border-bottom: 0; flex: none; }
.col2 > .clientrow { width: 324px; }
.clientrow .lensbtn { width: 24px; }
.clientrow .del { width: 28px; }
.del svg { width: 18px; height: 18px; margin-top: -1px; }
.grupo { height: 20px; display: flex; overflow: hidden; line-height: 24px; }
.grupo .cb { margin: 3px 1px 0 1px; height: 17px; }
.cb svg { margin-top: 5px; }
.g1 { letter-spacing: -.1px; line-height: 28px; height: 20px; overflow: hidden; }
.g2 { margin-left: auto; margin-right: 7px; letter-spacing: 0; line-height: 23px; }
.grupos { height: 62px; }
.incl { height: 22px; display: flex; padding: 3px 0 0 1px; font: bold 14px/18px "Liberation Sans"; letter-spacing: -.15px; white-space: nowrap; }
.incl em { width: 13px; height: 13px; border: 1px solid #000; background: #fff; box-shadow: 3px 3px 0 #000; margin-right: 9px; }
.hd small, .prod small { font-size: 13px; font-weight: bold; letter-spacing: .12px; color: #fff; }
.centro { height: 20px; }
.centro span { margin: 0 0 0 47px; letter-spacing: -.36px; line-height: 22px; }
.centro small { margin: 0 16px 0 auto; line-height: 20px; }
.costos { height: 58px; display: block; }
.prod { margin-top: 3px; height: 19px; display: flex; font: bold 16px/21px "Liberation Sans"; letter-spacing: -.3px; }
.prod .emb { margin-left: 123px; }
.prod small { margin-left: auto; background: #008; width: 58px; padding-left: 2px; line-height: 18px; }
.prodcombo { height: 20px; border: 1px solid #1c1c98; border-top: 0; }
.opc { margin-top: 3px; line-height: 22px; }
.emb { color: #a2a2a8; text-shadow: 1px 1px 0 #fff; }
.checks { height: 221px; border: 1px solid #1c1c98; border-top: 0; padding: 2px 0 0 5px; }
.checks label { display: flex; height: 20.200px; font: bold 14px/19px "Liberation Sans"; letter-spacing: -.01px; white-space: nowrap; gap: 6px; }
.checks .w { letter-spacing: .07px; }
em { width: 15px; height: 15px; background: #fff; border: 2px solid #555; border-right: 1px solid #e4e4ec; border-bottom: 1px solid #e4e4ec; }
em.on svg { width: 10px; height: 9px; margin: 1px 0 0 1px; }
.u2 em { margin-top: -1px; }
.u3 em { margin-top: -2px; }
.mon .combo { margin: 0 0 0 -3px; width: 95px; height: 19px; flex: none; border: 1px solid #eee; }
.checks .zon { padding-top: 4px; height: 31px; letter-spacing: -.04px; }
.checks .suc { letter-spacing: -.03px; }
.sucursal { margin-top: 4px; display: flex; height: 20px; gap: 2px; }
.sucursal .box { width: 69px; flex: none; font: bold 15px/19px "Liberation Sans"; letter-spacing: -.45px; padding-left: 2px; border-width: 1px 2px 1px 1px; white-space: nowrap; }
.sucursal .combo { flex: 1; border: 1px solid #fff; border-top: 2px solid #777; border-left: 2px solid #777; }
.orden { margin-top: 3px; height: 20px; display: flex; border: 1px solid #1c1c98; }
.orden b { width: 64px; font-size: 16px; line-height: 20px; text-align: center; letter-spacing: -.2px; border-right: 1px solid #1c1c98; }
.orden .combo { flex: 1; letter-spacing: -.05px; }

.zh { width: 322px; height: 20px; padding-right: 3px; }
.zlist { width: 321px; height: 101px; background: #fff; border: 1px solid #1c1c98; border-top: 0; flex: none; }
.zfoot { width: 321px; display: flex; border: 1px solid #1c1c98; border-top: 0; padding: 1px 0 0 5px; font-size: 13px; line-height: 16px; flex: none; letter-spacing: 0; text-shadow: 1px 1px 0 #fff, .5px 0 0 #a2a2a8; }
.zfoot em { margin-right: 17px; }
.f1 { height: 22px; } .f2 { height: 23px; padding-top: 3px; }
.f2 em { margin-right: 11px; }
.z2 { margin-top: 7px; height: 22px; line-height: 23px; }
.mas { margin-top: 23px; width: 319px; height: 23px; line-height: 24px; padding-right: 3px; }
.masbox { width: 319px; height: 49px; border: 1px solid #1c1c98; border-top: 0; padding: 8px 0 0 7px; flex: none; }
.masbox label { display: flex; height: 19px; font: bold 14px/19px "Liberation Sans"; letter-spacing: -.17px; gap: 7px; white-space: nowrap; }
.masbox svg { width: 14px; height: 14px; }
.tallas { margin-top: 8px; width: 318px; height: 21px; line-height: 23px; padding-right: 2px; }
.tl { width: 318px; height: 58px; flex: none; }
.colores { margin-top: 11px; width: 317px; height: 22px; line-height: 23px; padding-right: 3px; }
.cl { width: 317px; height: 57px; flex: none; }
.rc { display: flex; margin-left: 2px; font: bold 14px/17px "Liberation Sans"; letter-spacing: .24px; gap: 8px; white-space: nowrap; flex: none; }
.m1 { margin-top: 3px; height: 22px; } .m2 { height: 27px; letter-spacing: .3px; }
.rc span { padding-top: 3px; }
.m2 span { padding-top: 2px; }
.m2 em { margin-top: -1px; }
.exp { margin-left: 3px; height: 35px; font: 13px/15.500px "Noto Sans", sans-serif; letter-spacing: -.41px; gap: 7px; white-space: normal; width: 300px; }
.exp span { padding: 0; margin-top: -2px; text-shadow: .3px 0 0 #000; }
.flat { width: 13px; height: 14px; border: 1.500px solid #222; margin-top: 0; }
.m4 { height: 31px; letter-spacing: .03px; }
.bigbtns { display: flex; margin-left: 52px; flex: none; }
.big { background: #fff; height: 38px; border-right: 2px solid #888; border-bottom: 2px solid #888; display: flex; font-weight: bold; text-align: center; }
.b1 { width: 110px; font-size: 14px; line-height: 16.500px; letter-spacing: -.2px; } .b1 span { width: 58px; padding-top: 4px; }
.b2 { width: 111px; font-size: 12px; line-height: 13px; letter-spacing: -.35px; } .b2 span { width: 61px; padding-top: 4px; }

.status { height: 25px; flex: none; background: linear-gradient(#f4faff 0 2px, #cdf 2px 8px, #bdf 8px 14px, #cdf 14px 18px, #def 18px); display: flex; align-items: center; font: 13px/22px "Noto Sans", sans-serif; color: #2c3c80; border-bottom: 1px solid #a8b8d8; }
.fin { padding-left: 9px; letter-spacing: -.22px; width: 912px; }
.sep { width: 2px; height: 22px; background: #fff; border-left: 1px solid #9bbbe8; }
.bloq { margin-left: auto; letter-spacing: -.1px; margin-right: 18px; }
.acc { margin: 0 12px 0 4px; letter-spacing: .09px; }
.taskbar { height: 47px; flex: none; background: #000; display: flex; }
.tk { width: 59px; display: grid; place-items: center; }
.w55 { width: 55px; } .w58 { width: 58px; } .w60 { width: 60px; } .w63 { width: 63px; }
.current { width: 58px; margin-left: 2px; background: #333; border-bottom: 2px solid #76b9ed; }
.appletter { font: bold 12px "Open Sans", sans-serif; fill: #fff; text-anchor: middle; }
.tray { margin-left: auto; width: 363px; position: relative; }
.tray > svg { width: 370px; }
.lang, .clock { position: absolute; top: 3px; color: #fff; text-align: center; font: 14px/22px "Open Sans", sans-serif; }
.lang { left: 177px; width: 30px; letter-spacing: -.3px; }
.clock { left: 218px; width: 80px; letter-spacing: -.2px; }

.tvbar { position: absolute; left: 568px; top: 0; width: 690px; height: 43px; z-index: 5; background: #f0f0f0; border: 1px solid #ccc; border-top: 0; display: flex; align-items: center; font: 15px/1 "Open Sans", sans-serif; color: #111; padding: 0 0 2px 9px; white-space: nowrap; }
.i2 { margin-left: 15px; margin-top: -1px; } .t1 { margin-left: 6px; width: 35px; letter-spacing: -.36px; }
.i3 { margin-left: 19px; } .t2 { margin-left: 11px; width: 58px; letter-spacing: -.32px; }
.ca { margin-left: 7px; color: #777; }
.i4 { margin-left: 15px; } .t3 { margin-left: 8px; width: 21px; letter-spacing: -.5px; }
.i5 { margin-left: 14px; } .t4 { margin-left: 7px; width: 71px; letter-spacing: -.58px; }
.t4 + .ca { margin-left: 6px; }
.t3 + .ca { margin-left: 6px; }
.i6 { margin-left: 14px; } .t5 { margin-left: 6px; width: 110px; letter-spacing: -.48px; }
.t5 + .ca { margin-left: 6px; }
.i7 { margin-left: 18px; }
.tvtab { position: absolute; left: 1164px; top: 41px; width: 63px; height: 24px; z-index: 6; background: #f0f0f0; border-bottom: 2px solid #ccc; border-right: 1px solid #ccc; }
```
